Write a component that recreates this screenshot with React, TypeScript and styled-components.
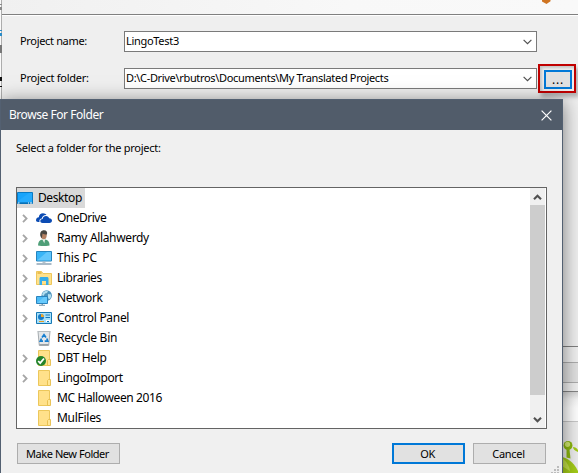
import React from "react";
import styled, { createGlobalStyle, css } from "styled-components";

const Global = createGlobalStyle`
  *, *::before, *::after { box-sizing: border-box; }
  body { margin: 0; overflow: hidden; background: #efefef; }
`;

const Screen = styled.div`
  position: relative;
  width: 578px;
  height: 473px;
  overflow: hidden;
  display: flex;
  background: #efefef;
  color: #000;
  font-family: "Noto Sans", "Open Sans", sans-serif;
  font-size: 11px;
`;

const Label = styled.span<{ $track?: number; $size?: number }>`
  white-space: pre;
  font-size: ${(p) => p.$size ?? 12}px;
  letter-spacing: ${(p) => p.$track ?? 0}px;
  line-height: 16px;
`;

/* Sliver of the page that shows beside the wizard window */
const Sliver = styled.div`
  width: 2px;
  height: 99px;
  flex: none;
  background: #fafafa;
  border-right: 1px solid #adadad;
  display: flex;
  flex-direction: column;
  gap: 1px;
  padding-top: 4px;
`;

const Fleck = styled.i<{ $color: string; $h: number; $top: number }>`
  width: 2px;
  height: ${(p) => p.$h}px;
  margin-top: ${(p) => p.$top}px;
  flex: none;
  background: ${(p) => p.$color};
`;

const Wizard = styled.div`
  flex: 1;
  min-width: 0;
  display: flex;
  flex-direction: column;
`;

const WizardHeader = styled.div`
  height: 16px;
  flex: none;
  padding-left: 540px;
  background: linear-gradient(90deg, #f0f0f0, #f8f8f8 60%, #f9f9f9);
  border-bottom: 1px solid #fff;
  box-shadow: inset 0 -1px 0 #808080;
  svg { display: block; }
`;

const Form = styled.div`
  height: 330px;
  flex: none;
  padding: 15px 2px 0 18px;
  display: flex;
  flex-direction: column;
`;

const Field = styled.div<{ $gap?: number }>`
  display: flex;
  height: 21px;
  margin-bottom: ${(p) => p.$gap ?? 0}px;
  align-items: center;
`;

const FieldName = styled.div`
  width: 104px;
  flex: none;
  padding-bottom: 1px;
  display: flex;
`;

const Combo = styled.div`
  width: 413px;
  height: 21px;
  flex: none;
  display: flex;
  align-items: center;
  justify-content: space-between;
  padding: 0 4px 2px 1px;
  background: #fff;
  border: 1px solid #7a7a7a;
  svg { margin-top: 3px; }
`;

const Highlight = styled.div`
  width: 38px;
  height: 29px;
  flex: none;
  margin: 0 0 1px 1px;
  padding: 4px 2px 2px 4px;
  border: 2px solid #c00000;
  box-shadow: 3px 4px 4px rgba(0, 0, 0, 0.25), inset 2px 2px 3px rgba(0, 0, 0, 0.18);
`;

const BrowseButton = styled.div`
  width: 28px;
  height: 19px;
  display: flex;
  align-items: center;
  justify-content: center;
  padding-top: 1px;
  background: #e1e1e1;
  border: 2px solid #0078d7;
`;

const WizardFooter = styled.div`
  height: 46px;
  flex: none;
  display: flex;
  flex-direction: column;
  padding-top: 15px;
  border-top: 1px solid #7f7f7f;
  border-bottom: 1px solid #858585;
  background: #f0f0f0;
`;

const FooterBar = styled.div`
  height: 21px;
  background: #e1e1e1;
  border: 1px solid #adadad;
  border-width: 1px 0;
`;

const PageBelow = styled.div`
  flex: 1;
  display: flex;
  flex-direction: column;
  background: linear-gradient(#d5d5d5, #f4f4f4 7px, #fff 16px, #fff);
`;

const PageBand = styled.div`
  margin-top: 29px;
  flex: 1;
  border-top: 1px solid #c8c8c8;
  background: #eee;
  padding: 19px 0 0 560px;
  svg { display: block; }
`;

const Dialog = styled.div`
  position: absolute;
  left: 0;
  top: 99px;
  width: 563px;
  height: 380px;
  display: flex;
  flex-direction: column;
  background: #f0f0f0;
  border: 1px solid #536071;
  box-shadow: 0 3px 18px rgba(0, 0, 0, 0.5);
`;

const TitleBar = styled.div`
  height: 30px;
  flex: none;
  display: flex;
  align-items: center;
  justify-content: space-between;
  padding: 0 10px 0 8px;
  color: #fff;
  background: #515c6a;
`;

const Prompt = styled.div`
  height: 57px;
  flex: none;
  padding: 10px 0 0 15px;
`;

const TreeBox = styled.div`
  height: 242px;
  flex: none;
  margin: 0 15px;
  padding-right: 1px;
  display: flex;
  background: #fff;
  border: 1px solid #646464;
`;

const Tree = styled.div`
  flex: 1;
`;

const Row = styled.div<{ $root?: boolean }>`
  height: 20px;
  display: flex;
  align-items: center;
  ${(p) =>
    p.$root &&
    css`
      width: 68px;
      background: #d9d9d9;
    `}
`;

const Twisty = styled.div`
  width: 19px;
  height: 20px;
  padding: 6px 0 0 5px;
  svg { display: block; }
`;

const IconCell = styled.div`
  width: 16px;
  height: 16px;
  flex: none;
  margin-right: 5px;
  svg { display: block; }
`;

const ScrollBar = styled.div`
  width: 15px;
  display: flex;
  flex-direction: column;
  background: #f0f0f0;
`;

const ScrollEnd = styled.div<{ $h: number; $low?: boolean }>`
  height: ${(p) => p.$h}px;
  flex: none;
  display: flex;
  align-items: center;
  justify-content: center;
  padding-top: ${(p) => (p.$low ? 16 : 2)}px;
`;

const Thumb = styled.div`
  flex: 1;
  background: #cdcdcd;
`;

const Actions = styled.div`
  display: flex;
  margin-top: 14px;
  padding: 0 16px;
`;

const PushButton = styled.div<{ $w: number; $primary?: boolean }>`
  width: ${(p) => p.$w}px;
  height: 21px;
  display: flex;
  align-items: center;
  justify-content: center;
  padding-right: 2px;
  background: #e1e1e1;
  border: ${(p) => (p.$primary ? "2px solid #0078d7" : "1px solid #adadad")};
  & + & { margin-left: 8px; }
`;

const Spacer = styled.div`
  flex: 1;
`;

const GripRow = styled.div`
  display: flex;
  justify-content: flex-end;
  height: 9px;
  padding-right: 3px;
  margin-top: 2px;
`;

const DownChevron = () => (
  <svg width="9" height="6" viewBox="0 0 9 6" fill="none">
    <path d="M.6 .9 4.5 4.6 8.4 .9" stroke="#505050" strokeWidth="1.2" />
  </svg>
);

const ScrollArrow = ({ up = false }: { up?: boolean }) => (
  <svg width="9" height="7" viewBox="0 0 9 7" fill="none">
    <path d={up ? "M1 5.3 4.5 1.8 8 5.3" : "M1 1.7 4.5 5.2 8 1.7"} stroke="#505050" strokeWidth="2.1" />
  </svg>
);

const folderBody = (
  <>
    <path d="M2.5.5h11v15h-11z" fill="#ffe18b" stroke="#ecc75b" />
    <path d="M11.5 15.5v-5l1-1h2v6z" fill="#ffe696" stroke="#e6bd4c" strokeWidth=".9" />
  </>
);

const icons: Record<string, React.ReactNode> = {
  desktop: (
    <>
      <path d="M.5 2.5h15v11H.5z" fill="#18a4fb" stroke="#087ac4" />
      <path d="M1 11 12 3h3v9H1z" fill="#35b3ff" opacity=".45" />
      <path d="M1 13h14" stroke="#0866a5" />
      <path d="M1 13h1.5M11 13h1M13 13h2" stroke="#fff" />
    </>
  ),
  onedrive: (
    <>
      <path d="M0 10.3C0 8.4 1.4 7.5 2.8 7.3 3 4.8 4.8 3.3 7 3.3c1.6 0 2.7.8 3.5 1.8-2.7-.2-4.3 1.4-4.7 3.3-1.8.1-2.8 1.6-2.3 3.7H2C.8 12 0 11.3 0 10.3z" fill="#0b4bb3" />
      <path d="M4.3 11c0-1.3 1-2 2.3-2 .3-2 1.7-3.1 3.4-3.1 1.7 0 2.8 1 3.2 2.3 1.7 0 2.8 1 2.8 2.4 0 1.5-1 2.4-2.5 2.4H6.600c-1.4 0-2.3-.8-2.3-2z" fill="#0b4bb3" />
    </>
  ),
  user: (
    <>
      <path d="M2 15.5c0-3.5 1.6-5.7 4.6-6h2.5c2.9.4 4.5 2.4 4.500 6-3.5.8-8 .8-11.600 0z" fill="#4f9f78" />
      <path d="m6 8.8 2.3 4.5 1-4.800z" fill="#e8f1ea" />
      <ellipse cx="7.8" cy="5.3" rx="2.9" ry="4" fill="#b48163" />
      <path d="M4.3 5.8C3.7 2.3 5.3.2 8 .2c2.6 0 3.6 1.6 3 4.4C9 4.6 7.5 4 6.5 3.4 6.3 5.5 6 8 5.3 8.300z" fill="#484641" />
    </>
  ),
  pc: (
    <>
      <path d="M.5 1.5h15v9.5H.5z" fill="#39b5f7" stroke="#2685bf" />
      <path d="M1 10.5 11 2h4v8.500z" fill="#79d1ff" opacity=".65" />
      <path d="M6.5 11.5h3v1.300h-3z" fill="#a6b6c0" />
      <path d="M.5 14h15" stroke="#8ea3b5" strokeWidth="1.5" />
    </>
  ),
  libraries: (
    <>
      <path d="M.5 1.5h5l1.5 2h8.500v11H.5z" fill="#ffe18b" stroke="#edc65a" />
      <path d="M1.5 3h4" stroke="#d59a19" />
      <path d="M3.5 15V8.5c0-1 .7-1.5 1.5-1.5h6c.8 0 1.5.5 1.5 1.500V15H10v-4H6v4z" fill="#36adea" />
    </>
  ),
  network: (
    <>
      <circle cx="10.7" cy="5.5" r="5.2" fill="#4d94bd" />
      <path d="M7 2.5c2-2 4-2 5-1.5L11 3l-2 .5L7.500 6 6 5zM12 4l3 .5c.5 2-.4 4-2 5l-1-2z" fill="#b4dff0" />
      <path d="M.5 6.500h11v7H.5z" fill="#4cbcf7" stroke="#2a83bd" />
      <path d="m1 13 7-6h3v6z" fill="#7bd4ff" opacity=".6" />
      <path d="M3 15.3h6" stroke="#7c9bad" />
      <path d="M5.5 14h1.500v1H5.500z" fill="#7c9bad" />
    </>
  ),
  control: (
    <>
      <path d="M.5 2.5h15v11H.5z" fill="#a7e0fb" stroke="#1779b5" />
      <circle cx="5" cy="7" r="3" fill="#167bc7" />
      <path d="M5 7V4a3 3 0 0 1 3 3z" fill="#f4a72b" />
      <path d="M9.5 5h4.500M9.500 7.500H14" stroke="#1877b5" />
      <path d="M3 11.5h5" stroke="#e49b25" />
      <path d="M10 11h4" stroke="#fff" strokeWidth="2" />
      <path d="M11 11.5h2" stroke="#1877b5" />
    </>
  ),
  recycle: (
    <>
      <path d="m2 1.5 1.3 14h9.400L14 1.500z" fill="#e4e7e9" stroke="#a5abaf" />
      <path d="M1.5 1.5h13" stroke="#b7bdc0" />
      <path d="m3.5 14.7 9-.1" stroke="#8f979c" />
      <path d="M6 7.5 8 4.700l2 2.800M10.800 8.500l1 2.700H8.700M7 11.200H4.300l1.200-2.700" fill="none" stroke="#167ed0" strokeWidth="1.7" />
    </>
  ),
  synced: (
    <>
      {folderBody}
      <circle cx="5" cy="11" r="5" fill="#24842b" />
      <path d="m2.2 11 2 2.100L8 8.500" fill="none" stroke="#fff" strokeWidth="1.8" />
    </>
  ),
  folder: folderBody,
};

const Icon = ({ name }: { name: string }) => (
  <IconCell>
    <svg width="16" height="16" viewBox="0 0 16 16">{icons[name]}</svg>
  </IconCell>
);

const nodes = [
  { icon: "onedrive", text: "OneDrive", open: true, track: -0.5 },
  { icon: "user", text: "Ramy Allahwerdy", open: true, track: -0.35 },
  { icon: "pc", text: "This PC", open: true, track: -0.15 },
  { icon: "libraries", text: "Libraries", open: true, track: -0.45 },
  { icon: "network", text: "Network", open: true, track: -0.4 },
  { icon: "control", text: "Control Panel", open: true, track: -0.3 },
  { icon: "recycle", text: "Recycle Bin", open: false, track: -0.28 },
  { icon: "synced", text: "DBT Help", open: true, track: -0.38 },
  { icon: "folder", text: "LingoImport", open: true, track: -0.45 },
  { icon: "folder", text: "MC Halloween 2016", open: false, track: -0.37 },
  { icon: "folder", text: "MulFiles", open: false, track: -0.28 },
];

export default function App() {
  return (
    <>
      <Global />
      <Screen>
        <Sliver>
          <Fleck $color="#8a8a8a" $h={1} $top={0} />
          <Fleck $color="#8a8a8a" $h={3} $top={1} />
          <Fleck $color="#2a8cc8" $h={1} $top={19} />
          <Fleck $color="#2a8cc8" $h={3} $top={1} />
          <Fleck $color="#777" $h={8} $top={8} />
          <Fleck $color="#111" $h={4} $top={23} />
          <Fleck $color="#111" $h={1} $top={4} />
        </Sliver>
        <Wizard>
          <WizardHeader>
            <svg width="9" height="5" viewBox="0 0 9 5">
              <path d="M0 0h8.500v1.300L4.500 4 0 1.500z" fill="#cf7422" />
            </svg>
          </WizardHeader>
          <Form>
            <Field $gap={16}>
              <FieldName><Label $size={11} $track={-0.33}>Project name:</Label></FieldName>
              <Combo><Label $size={11} $track={-0.3}>LingoTest3</Label><DownChevron /></Combo>
            </Field>
            <Field>
              <FieldName><Label $size={11} $track={-0.25}>Project folder:</Label></FieldName>
              <Combo>
                <Label $size={11} $track={-0.33}>{"D:\\C-Drive\\rbutros\\Documents\\My Translated Projects"}</Label>
                <DownChevron />
              </Combo>
              <Highlight><BrowseButton><Label $track={0.8}>...</Label></BrowseButton></Highlight>
            </Field>
          </Form>
          <WizardFooter><FooterBar /></WizardFooter>
          <PageBelow>
            <PageBand>
              <svg width="16" height="33" viewBox="0 0 16 33">
                <path d="M0 16c5 1 11 4 16 14v3H0z" fill="#a4cc18" />
                <path d="M0 17c4 3 7 7 8 13L0 25z" fill="#c5e34a" />
                <circle cx="6" cy="4.5" r="4.5" fill="#8db90f" />
                <circle cx="5.500" cy="3.3" r="2.6" fill="#d3eb72" />
                <path d="M4.500 8.500h3l1 9-4-1z" fill="#8db90f" />
                <path d="M11 6c2 0 4 1 5 3v2c-3-1-5-3-5-5z" fill="#a4cc18" />
              </svg>
            </PageBand>
          </PageBelow>
        </Wizard>
        <Dialog>
          <TitleBar>
            <Label $track={-0.45}>Browse For Folder</Label>
            <svg width="11" height="11" viewBox="0 0 11 11">
              <path d="m.6.6 9.800 9.800m0-9.800L.6 10.400" stroke="#fff" strokeWidth="1.2" />
            </svg>
          </TitleBar>
          <Prompt><Label $size={11} $track={-0.25}>Select a folder for the project:</Label></Prompt>
          <TreeBox>
            <Tree>
              <Row $root><Icon name="desktop" /><Label $track={-0.4}>Desktop</Label></Row>
              {nodes.map((n) => (
                <Row key={n.text}>
                  <Twisty>
                    {n.open && (
                      <svg width="6" height="9" viewBox="0 0 6 9" fill="none">
                        <path d="m1 .8 3.600 3.700L1 8.200" stroke="#a6a6a6" strokeWidth="1.8" />
                      </svg>
                    )}
                  </Twisty>
                  <Icon name={n.icon} />
                  <Label $track={n.track}>{n.text}</Label>
                </Row>
              ))}
            </Tree>
            <ScrollBar>
              <ScrollEnd $h={17}><ScrollArrow up /></ScrollEnd>
              <Thumb />
              <ScrollEnd $h={33} $low><ScrollArrow /></ScrollEnd>
            </ScrollBar>
          </TreeBox>
          <Actions>
            <PushButton $w={103}><Label $size={11} $track={-0.45}>Make New Folder</Label></PushButton>
            <Spacer />
            <PushButton $w={73} $primary><Label $size={11} $track={-0.4}>OK</Label></PushButton>
            <PushButton $w={73}><Label $size={11} $track={-0.3}>Cancel</Label></PushButton>
          </Actions>
          <GripRow>
            <svg width="8" height="8" viewBox="0 0 8 8">
              <path d="M6 0h2v2H6zM3 3h2v2H3zM6 3h2v2H6zM0 6h2v2H0zM3 6h2v2H3zM6 6h2v2H6z" fill="#bcbcbc" />
            </svg>
          </GripRow>
        </Dialog>
      </Screen>
    </>
  );
}
